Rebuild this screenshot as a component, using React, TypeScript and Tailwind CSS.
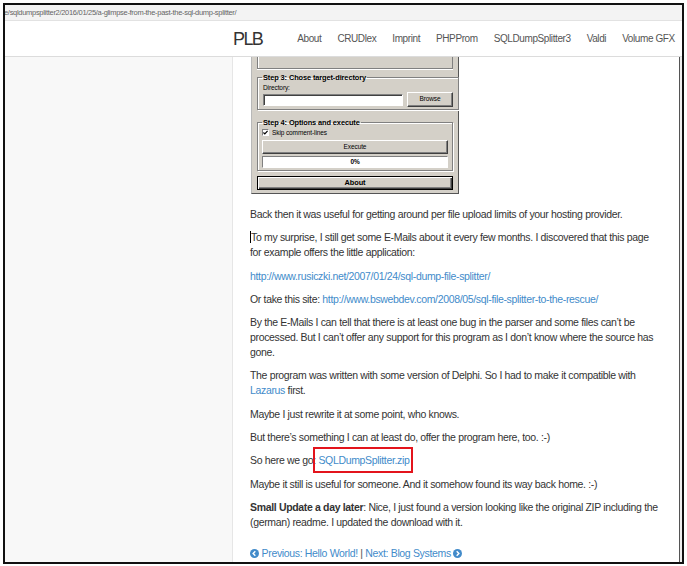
import React from 'react'

const sans = "font-['Liberation_Sans',Arial,sans-serif]"

function ChevronCircle({ dir }: { dir: 'left' | 'right' }) {
  return (
    <svg width="9" height="9" viewBox="0 0 10 10" className="inline-block align-[-1px]">
      <circle cx="5" cy="5" r="5" fill="currentColor" />
      {dir === 'left' ? (
        <path d="M5.9 2.6 L3.5 5 L5.9 7.4" stroke="#fff" strokeWidth="1.6" fill="none" />
      ) : (
        <path d="M4.1 2.6 L6.5 5 L4.1 7.4" stroke="#fff" strokeWidth="1.6" fill="none" />
      )}
    </svg>
  )
}

const raised =
  'border border-t-white border-l-white border-r-[#404040] border-b-[#404040] shadow-[inset_-1px_-1px_0_#808080] bg-[#d4d0c8]'
const etched = 'border border-[#808080] shadow-[inset_1px_1px_0_#fff,1px_1px_0_#fff]'

function Dialog() {
  return (
    <div
      className={`ml-[1px] w-[208px] h-[137px] bg-[#d4d0c8] border-l border-r border-b border-l-[#b8b8b8] border-r-[#555] border-b-[#555] flex flex-col text-[6.5px] tracking-[-0.1px] text-black ${sans}`}
    >
      {/* rest of step 2 */}
      <div className="mx-[5px] h-[12px] border-l border-r border-b border-[#808080] shadow-[inset_1px_0_0_#fff,0_1px_0_#fff]" />

      <fieldset className={`mx-[5px] mt-[4px] px-[5px] pb-[2px] ${etched}`}>
        <legend className="ml-[-1px] px-[1px] text-[7.4px] tracking-[-0.1px] font-bold leading-[9px]">
          Step 3: Chose target-directory
        </legend>
        <div className="leading-[9px] mt-[1px]">Directory:</div>
        <div className="flex items-center gap-[4px]">
          <div className="w-[140px] h-[12px] bg-white border border-t-[#808080] border-l-[#808080] border-r-white border-b-white shadow-[inset_1px_1px_0_#404040]" />
          <div className={`w-[46px] h-[15px] flex items-center justify-center ${raised}`}>Browse</div>
        </div>
      </fieldset>

      <fieldset className={`mx-[5px] mt-[8px] px-[4px] pb-[2px] ${etched}`}>
        <legend className="ml-[0px] px-[1px] text-[7.4px] tracking-[-0.1px] font-bold leading-[9px]">
          Step 4: Options and execute
        </legend>
        <div className="flex items-center gap-[3px] mt-[1px] h-[9px] leading-[9px]">
          <span className="w-[7px] h-[7px] bg-white border border-t-[#808080] border-l-[#808080] border-r-white border-b-white flex items-center justify-center">
            <svg width="5" height="5" viewBox="0 0 6 6">
              <path d="M0.5 3 L2.2 4.8 L5.5 1" stroke="#000" strokeWidth="1.4" fill="none" />
            </svg>
          </span>
          <span>Skip comment-lines</span>
        </div>
        <div className={`mt-[3px] h-[14px] flex items-center justify-center ${raised}`}>Execute</div>
        <div className="mt-[2px] h-[12px] bg-white border border-t-[#808080] border-l-[#808080] border-r-white border-b-white flex items-center justify-center font-bold">
          0%
        </div>
      </fieldset>

      <div className="mx-[5px] mt-[5px] h-[14px] border border-black bg-[#d4d0c8] shadow-[inset_1px_1px_0_#fff,inset_-1px_-1px_0_#404040,inset_-2px_-2px_0_#808080] flex items-center justify-center font-bold text-[7.4px]">
        About
      </div>
    </div>
  )
}

export default function App() {
  const navItems = ['About', 'CRUDlex', 'Imprint', 'PHPProm', 'SQLDumpSplitter3', 'Valdi', 'Volume GFX']
  const link = 'text-[#428bca]'
  const para = 'mb-[8.6px] whitespace-nowrap'

  return (
    <div className="w-[687px] h-[566px] bg-white pt-[3px] pl-[3px] overflow-hidden">
      <div className="w-[681px] h-[561px] border-2 border-[#111] flex flex-col overflow-hidden">
        {/* address bar */}
        <div className={`h-[16px] shrink-0 bg-[#f3f3f3] border-b border-[#e2e2e2] text-[#666] text-[7.5px] tracking-[-0.3px] leading-[16px] whitespace-nowrap overflow-hidden -ml-[1px] ${sans}`}>
          e/sqldumpsplitter2/2016/01/25/a-glimpse-from-the-past-the-sql-dump-splitter/
        </div>

        {/* navbar */}
        <div className={`h-[36px] shrink-0 bg-white border-b border-[#dcdcdc] flex items-center pl-[228px] ${sans}`}>
          <span className="text-[18px] tracking-[-1.6px] text-[#333] leading-none">PLB</span>
          <ul className="flex ml-[27px] text-[10px] tracking-[-0.4px] text-[#555] whitespace-nowrap">
            {navItems.map((item) => (
              <li key={item} className="px-[8px]">
                {item}
              </li>
            ))}
          </ul>
        </div>

        {/* body */}
        <div className="flex-1 flex min-h-0">
          <div className="w-[228px] shrink-0 bg-[#f8f8f8] border-r border-[#e6e6e6]" />
          <div className={`flex-1 bg-white pl-[17px] text-[10.5px] tracking-[-0.34px] text-[#333] leading-[14.8px] ${sans}`}>
            <Dialog />

            <div className="mt-[13px]">
              <p className={para}>Back then it was useful for getting around per file upload limits of your hosting provider.</p>
              <p className={para}>
                <span className="inline-block w-px h-[12px] bg-black align-[-2px]" />
                To my surprise, I still get some E-Mails about it every few months. I discovered that this page
                <br />
                for example offers the little application:
              </p>
              <p className={para}>
                <span className={link}>http://www.rusiczki.net/2007/01/24/sql-dump-file-splitter/</span>
              </p>
              <p className={para}>
                Or take this site: <span className={link}>http://www.bswebdev.com/2008/05/sql-file-splitter-to-the-rescue/</span>
              </p>
              <p className={para}>
                By the E-Mails I can tell that there is at least one bug in the parser and some files can’t be
                <br />
                processed. But I can’t offer any support for this program as I don’t know where the source has
                <br />
                gone.
              </p>
              <p className={para}>
                The program was written with some version of Delphi. So I had to make it compatible with
                <br />
                <span className={link}>Lazarus</span> first.
              </p>
              <p className={para}>Maybe I just rewrite it at some point, who knows.</p>
              <p className={para}>But there’s something I can at least do, offer the program here, too. :-)</p>
              <p className={para}>
                So here we go:{' '}
                <span className={`${link} relative`}>
                  SQLDumpSplitter.zip
                  <span className="absolute -left-[5px] -right-[4px] -top-[7px] -bottom-[7px] border-2 border-[#e3141c]" />
                </span>
              </p>
              <p className={para}>Maybe it still is useful for someone. And it somehow found its way back home. :-)</p>
              <p className={para}>
                <b>Small Update a day later</b>: Nice, I just found a version looking like the original ZIP including the
                <br />
                (german) readme. I updated the download with it.
              </p>
              <p className="mt-[16px] whitespace-nowrap">
                <span className={link}>
                  <ChevronCircle dir="left" /> Previous: Hello World!
                </span>{' '}
                <span className="text-[#555]">|</span>{' '}
                <span className={link}>
                  Next: Blog Systems <ChevronCircle dir="right" />
                </span>
              </p>
            </div>
          </div>
          <div className="w-[3px] shrink-0 bg-[#eeeeee] border-l border-[#555]" />
        </div>
      </div>
    </div>
  )
}
